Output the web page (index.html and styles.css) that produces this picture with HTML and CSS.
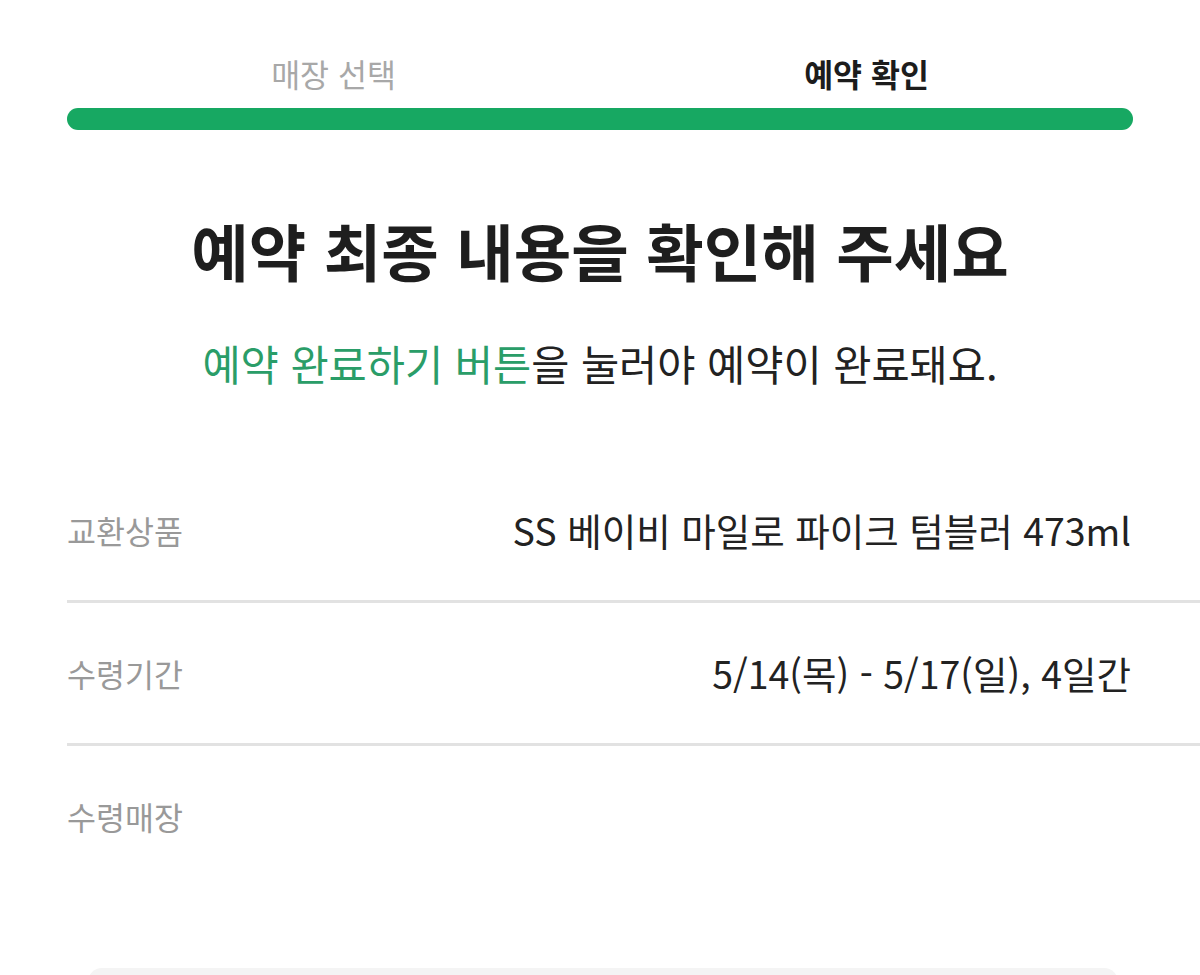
FILE: index.html
```html
<!DOCTYPE html>
<html lang="ko">
<head>
  <meta charset="utf-8" />
  <title>예약 확인</title>
  <link rel="stylesheet" href="styles.css">
</head>
<body>

<div class="steps">
  <div class="step">매장 선택</div>
  <div class="step current">예약 확인</div>
  <div class="progress"><div class="progress-fill"></div></div>
</div>

<div class="intro">
  <h1>예약 최종 내용을 확인해 주세요</h1>
  <p><span class="accent">예약 완료하기 버튼</span>을 눌러야 예약이 완료돼요.</p>
</div>

<div class="summary">
  <div class="row">
    <div class="label">교환상품</div>
    <div class="value">SS 베이비 마일로 파이크 텀블러 473ml</div>
  </div>
  <div class="row">
    <div class="label">수령기간</div>
    <div class="value">5/14(목) - 5/17(일), 4일간</div>
  </div>
  <div class="row last">
    <div class="label">수령매장</div>
    <div class="value"></div>
  </div>
</div>

<div class="sheet"></div>

</body>
</html>
```

FILE: styles.css
```css
body {
    margin: 0;
    background: #fff;
    font-family: "Noto Sans CJK KR", "Noto Sans", sans-serif;
    color: #222;
    overflow: hidden;
}
.steps {
    display: grid;
    grid-template-columns: 1fr 1fr;
    margin: 0 67px;
    padding-top: 52px;
}
.step {
    text-align: center;
    font-size: 31.5px;
    line-height: 42px;
    color: #a8a8a8;
}
.step.current {
    color: #1c1c1c;
    font-weight: bold;
}
.progress {
    grid-column: 1 / 3;
    margin-top: 14px;
    height: 22px;
    border-radius: 11px;
    background: #e6e6e6;
    overflow: hidden;
}
.progress-fill {
    width: 100%;
    height: 100%;
    background: #17a862;
}
.intro {
    text-align: center;
    padding-top: 83px;
}
.intro h1 {
    margin: 0;
    font-size: 62.5px;
    line-height: 74px;
    font-weight: bold;
    color: #1e1e1e;
}
.intro p {
    margin: 49px 0 0;
    font-size: 41.5px;
    line-height: 54px;
    color: #222;
}
.accent {
    color: #2a9d68;
}
.summary {
    margin: 70px 0 0 67px;
}
.row {
    display: flex;
    justify-content: space-between;
    align-items: center;
    padding: 48px 69px 48px 0;
    border-bottom: 3px solid #e2e2e2;
}
.row.last {
    border-bottom: 0;
}
.label {
    font-size: 31.5px;
    line-height: 44px;
    color: #999;
}
.value {
    font-size: 37.5px;
    line-height: 44px;
    color: #222;
}
.sheet {
    margin: 82px 82px 0 88px;
    height: 40px;
    border-radius: 14px 14px 0 0;
    background: #f4f4f4;
}
```
